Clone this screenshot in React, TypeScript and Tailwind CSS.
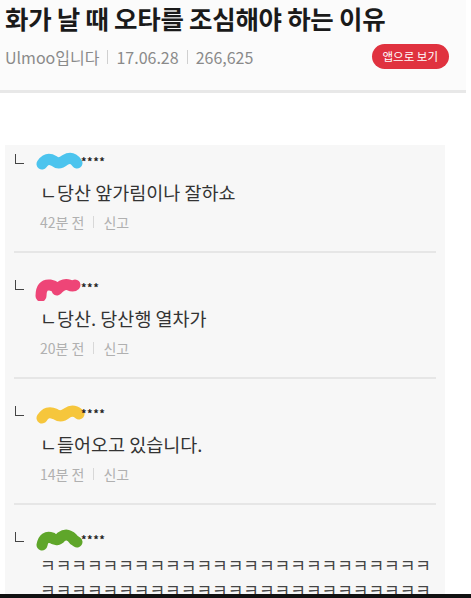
import React from "react";

const font = { fontFamily: '"Noto Sans CJK KR", "Noto Sans", sans-serif' };

type Comment = { color: string; blob: string; stars: string; text: string[]; time: string; ki?: boolean };

const comments: Comment[] = [
  { color: "#4cc4ee", blob: "M7 13 Q12 6 19 10 Q24 14 30 9 Q37 5 42 12", stars: "****", text: ["ㄴ당산 앞가림이나 잘하쇼"], time: "42분 전" },
  { color: "#ee4577", blob: "M6 19 Q6 7 15 8 Q21 9 22 13 Q28 6 34 8 Q38 10 40 8", stars: "***", text: ["ㄴ당산. 당산행 열차가"], time: "20분 전" },
  { color: "#f6c63c", blob: "M7 15 Q12 7 20 11 Q26 15 32 10 Q38 6 44 11", stars: "****", text: ["ㄴ들어오고 있습니다."], time: "14분 전" },
  { color: "#5fa62a", blob: "M7 16 Q9 6 17 9 Q22 13 26 8 Q33 3 39 11 L42 13", stars: "****", text: ["ㅋ".repeat(25), "ㅋ".repeat(25)], time: "", ki: true },
];

function Blob({ color, d }: { color: string; d: string }) {
  return (
    <svg width="50" height="24" viewBox="0 0 50 24">
      <path d={d} fill="none" stroke={color} strokeWidth="11" strokeLinecap="round" strokeLinejoin="round" />
    </svg>
  );
}

function CommentItem({ c, first }: { c: Comment; first: boolean }) {
  return (
    <div className={`mx-[9px] border-b-2 border-[#e6e6e6] pb-[19px] ${first ? "pt-[3px]" : "pt-[21px]"}`}>
      <div className="flex h-[24px] items-start">
        <span className="ml-[1px] mt-[6px] h-[10px] w-[9px] border-b-[1.5px] border-l-[1.5px] border-[#444]" />
        <span className="ml-[11px] mt-[3px]"><Blob color={c.color} d={c.blob} /></span>
        <span className="-ml-[4px] mt-[8px] text-[11px] font-bold leading-none tracking-[0.5px] text-[#222]">{c.stars}</span>
      </div>
      <div className={`${c.ki ? "mt-[2px]" : "mt-[8px]"} pl-[26px]`}>
        {c.text.map((t, i) => (
          <p key={i} className={c.ki ? "whitespace-nowrap text-[17px] leading-[25px] text-[#444]" : "text-[18.5px] leading-[24px] text-[#333]"}>{t}</p>
        ))}
      </div>
      {c.time && (
        <p className="mt-[8px] flex items-center pl-[26px] text-[14px] leading-[20px] text-[#b0b0b0]">
          <span>{c.time}</span>
          <span className="mx-[9px] h-[12px] w-px bg-[#d8d8d8]" />
          <span>신고</span>
        </p>
      )}
    </div>
  );
}

export default function App() {
  return (
    <div className="flex h-[598px] w-[471px] flex-col overflow-hidden bg-white" style={font}>
      <div className="min-h-0 flex-1 overflow-hidden">
        <div className="w-[466px] bg-[#fbfbfb]">
          <h1 className="pl-[5px] pt-[2px] text-[25.5px] font-bold leading-[32px] tracking-[-0.3px] text-[#1a1a1a]">
            화가 날 때 오타를 조심해야 하는 이유
          </h1>
          <div className="flex items-center pl-[5px] pr-[17px] pt-[10px] pb-[21px]">
            <div className="flex items-center text-[16px] text-[#8a8a8a]">
              <span>Ulmoo입니다</span>
              <span className="mx-[8px] h-[14px] w-px bg-[#d0d0d0]" />
              <span>17.06.28</span>
              <span className="mx-[8px] h-[14px] w-px bg-[#d0d0d0]" />
              <span>266,625</span>
            </div>
            <button className="ml-auto h-[25px] rounded-full bg-[#e0323f] px-[11px] text-[11.5px] leading-none text-white">
              앱으로 보기
            </button>
          </div>
          <div className="h-[3px] bg-[#e8e8e8]" />
        </div>
        <div className="ml-[5px] mt-[52px] w-[440px] bg-[#f7f7f7]">
          {comments.map((c, i) => (
            <CommentItem key={i} c={c} first={i === 0} />
          ))}
        </div>
      </div>
      <div className="h-[4px] bg-[#111]" />
    </div>
  );
}
